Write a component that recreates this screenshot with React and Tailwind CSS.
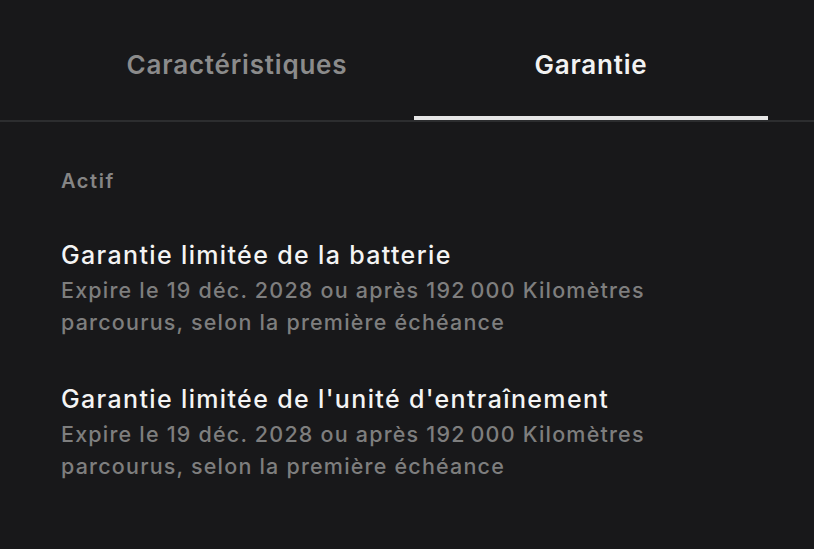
import React, { useState } from 'react';

const warranties = [
  {
    title: 'Garantie limitée de la batterie',
    detail: 'Expire le 19 déc. 2028 ou après 192\u202f000 Kilomètres parcourus, selon la première échéance',
  },
  {
    title: "Garantie limitée de l'unité d'entraînement",
    detail: 'Expire le 19 déc. 2028 ou après 192\u202f000 Kilomètres parcourus, selon la première échéance',
  },
];

function App() {
  const [tab, setTab] = useState('garantie');

  return (
    <div
      className="w-[814px] h-[549px] bg-[#18181a] overflow-hidden"
      style={{ fontFamily: 'Inter, "Noto Sans", sans-serif' }}
    >
      <div className="border-b-2 border-[#2c2d2f]">
        <div className="ml-[60px] w-[708px] flex">
          <button
            onClick={() => setTab('carac')}
            className={`w-1/2 h-[120px] flex flex-col justify-between items-center pt-[47px] text-[26px] tracking-[0.8px] font-semibold ${
              tab === 'carac' ? 'text-[#f2f2f2]' : 'text-[#8b8b8b]'
            }`}
          >
            <span className="leading-[36px]">Caractéristiques</span>
            <span className={`h-[4px] w-full ${tab === 'carac' ? 'bg-[#e6e6e6]' : ''}`} />
          </button>
          <button
            onClick={() => setTab('garantie')}
            className={`w-1/2 h-[120px] flex flex-col justify-between items-center pt-[47px] text-[26px] tracking-[0.8px] font-semibold ${
              tab === 'garantie' ? 'text-[#f2f2f2]' : 'text-[#8b8b8b]'
            }`}
          >
            <span className="leading-[36px]">Garantie</span>
            <span className={`h-[4px] w-full ${tab === 'garantie' ? 'bg-[#e6e6e6]' : ''}`} />
          </button>
        </div>
      </div>

      <div className="pl-[61px] pr-[60px] pt-[45px]">
        <div className="text-[20px] tracking-[1.6px] font-semibold text-[#858585] leading-[28px]">Actif</div>
        <div className="mt-[43px] flex flex-col gap-[44px]">
          {warranties.map((w, i) => (
            <div key={i} className="w-[640px]">
              <div className="text-[25px] tracking-[1.35px] font-medium text-[#f4f4f4] leading-[34px]">{w.title}</div>
              <div className="text-[21.5px] tracking-[1.2px] font-medium text-[#7e7e7e] leading-[32px] mt-[2px]">{w.detail}</div>
            </div>
          ))}
        </div>
      </div>
    </div>
  );
}

export default App;
